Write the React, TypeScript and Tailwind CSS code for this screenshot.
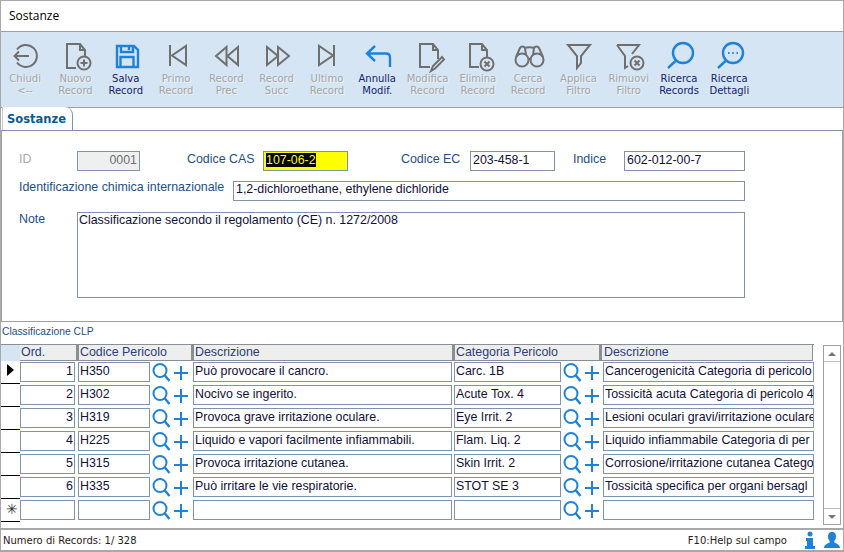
import type { ReactNode } from 'react';

const GREY = '#6f6f6f';
const BLUE = '#1f82d8';

type Tool = { top: string; bottom: string; on?: boolean; icon: ReactNode };

const Svg = ({ children, on }: { children: ReactNode; on?: boolean }) => (
  <svg
    width="36"
    height="33"
    viewBox="0 0 36 33"
    fill="none"
    strokeWidth={on ? 2.4 : 2}
    stroke={on ? BLUE : GREY}
    className="ml-[1px]"
  >
    {children}
  </svg>
);

const TOOLS: Tool[] = [
  {
    top: 'Chiudi',
    bottom: '<--',
    icon: (
      <Svg>
        <path d="M9 9.500a11 11 0 1 1 0 13" />
        <path d="M6 16h15M11 11.500 6.500 16l4.500 4.500" />
      </Svg>
    ),
  },
  {
    top: 'Nuovo',
    bottom: 'Record',
    icon: (
      <Svg>
        <path d="M18 28H9V4h13l5 6v7M22 4v6h5" />
        <circle cx="26" cy="23" r="6.500" />
        <path d="M26 19.500v7M22.500 23h7" />
      </Svg>
    ),
  },
  {
    top: 'Salva',
    bottom: 'Record',
    on: true,
    icon: (
      <Svg on>
        <path d="M9 6h17l4 4v17H9z" />
        <path d="M13 6v6h12V6M21 7v3M12.500 27V17h13v10" />
      </Svg>
    ),
  },
  {
    top: 'Primo',
    bottom: 'Record',
    icon: (
      <Svg>
        <path d="M11 5v21M27 6v19L13 15.500z" />
      </Svg>
    ),
  },
  {
    top: 'Record',
    bottom: 'Prec',
    icon: (
      <Svg>
        <path d="M17.500 7 7 16l10.500 9zM29 7 18.500 16 29 25z" />
      </Svg>
    ),
  },
  {
    top: 'Record',
    bottom: 'Succ',
    icon: (
      <Svg>
        <path d="m8 7 11 9-11 9zM19 7l11 9-11 9z" />
      </Svg>
    ),
  },
  {
    top: 'Ultimo',
    bottom: 'Record',
    icon: (
      <Svg>
        <path d="M25 5v21M10 6v19l14-9.500z" />
      </Svg>
    ),
  },
  {
    top: 'Annulla',
    bottom: 'Modif.',
    on: true,
    icon: (
      <Svg on>
        <path d="m15 6-8 7.500 8 7.500M7 13.500h19c3 0 4 2 4 4V27" />
      </Svg>
    ),
  },
  {
    top: 'Modifica',
    bottom: 'Record',
    icon: (
      <Svg>
        <path d="M20 27H10V4h13l5 6v9M23 4v6h5" />
        <path d="m21 31 2-5 9-9 2 2.500-9 9z" />
      </Svg>
    ),
  },
  {
    top: 'Elimina',
    bottom: 'Record',
    icon: (
      <Svg>
        <path d="M19 27h-9V4h12l5 6v7M22 4v6h5" />
        <circle cx="27" cy="24" r="6.500" />
        <path d="m24.500 21.500 5 5m0-5-5 5" />
      </Svg>
    ),
  },
  {
    top: 'Cerca',
    bottom: 'Record',
    icon: (
      <Svg>
        <circle cx="11" cy="20" r="6.500" />
        <circle cx="26" cy="20" r="6.500" />
        <path d="M17.500 19h3M5 17 9 8c1-2 4-2 5 0l1 7M32 17 28 8c-1-2-4-2-5 0l-1 7M14 8c2-1 7-1 9 0" />
      </Svg>
    ),
  },
  {
    top: 'Applica',
    bottom: 'Filtro',
    icon: (
      <Svg>
        <path d="M7 5h22l-9 11v7l-4 5V16z" />
      </Svg>
    ),
  },
  {
    top: 'Rimuovi',
    bottom: 'Filtro',
    icon: (
      <Svg>
        <path d="M6 5h22l-7 9M6 5l8 11v12l3-2" />
        <circle cx="26" cy="23" r="6.500" />
        <path d="m23.500 20.500 5 5m0-5-5 5" />
      </Svg>
    ),
  },
  {
    top: 'Ricerca',
    bottom: 'Records',
    on: true,
    icon: (
      <Svg on>
        <circle cx="21" cy="13" r="10" />
        <path d="M13.500 21 6 28" />
      </Svg>
    ),
  },
  {
    top: 'Ricerca',
    bottom: 'Dettagli',
    on: true,
    icon: (
      <Svg on>
        <circle cx="21" cy="13" r="10" />
        <path d="M13.500 21 6 28" />
        <path d="M16 13h1.500M20.200 13h1.500M24.500 13H26" strokeWidth="1.800" />
      </Svg>
    ),
  },
];

const ROWS = [
  ['1', 'H350', 'Può provocare il cancro.', 'Carc. 1B', 'Cancerogenicità Categoria di pericolo'],
  ['2', 'H302', 'Nocivo se ingerito.', 'Acute Tox. 4', 'Tossicità acuta Categoria di pericolo 4'],
  ['3', 'H319', 'Provoca grave irritazione oculare.', 'Eye Irrit. 2', 'Lesioni oculari gravi/irritazione oculare'],
  ['4', 'H225', 'Liquido e vapori facilmente infiammabili.', 'Flam. Liq. 2', 'Liquido infiammabile Categoria di per'],
  ['5', 'H315', 'Provoca irritazione cutanea.', 'Skin Irrit. 2', 'Corrosione/irritazione cutanea Catego'],
  ['6', 'H335', 'Può irritare le vie respiratorie.', 'STOT SE 3', 'Tossicità specifica per organi bersagl'],
  ['', '', '', '', ''],
];

const Cell = ({ w, children, right }: { w: string; children?: ReactNode; right?: boolean }) => (
  <div
    className={`${w} h-[20px] shrink-0 overflow-hidden whitespace-nowrap border border-[#7f93ad] bg-white pl-[1px] pr-[1px] text-[12.4px] leading-[17px] text-[#10103a] ${right ? 'text-right' : ''}`}
  >
    {children}
  </div>
);

const LookupIcons = ({ w }: { w: string }) => (
  <div className={`${w} flex h-[21px] shrink-0 items-center`}>
    <svg width="19" height="21" viewBox="0 0 19 21" fill="none" stroke={BLUE} strokeWidth="2" className="ml-[2px]">
      <circle cx="8" cy="8.500" r="6.500" />
      <path d="m12.500 13 5 6" strokeWidth="2.400" />
    </svg>
    <svg width="14" height="14" viewBox="0 0 14 14" fill="none" stroke={BLUE} strokeWidth="2" className="ml-[3px] mt-[1px]">
      <path d="M7 0v14M0 7h14" />
    </svg>
  </div>
);

const HeaderCell = ({ w, children, pad }: { w: string; children: ReactNode; pad: string }) => (
  <div className={`${w} ${pad} h-[16px] shrink-0 border-r border-b border-[#8a8f96] bg-[#eeeeee] text-[12.4px] leading-[15px] text-[#2a3f78]`}>
    {children}
  </div>
);

const Label = ({ w, children, muted, nudge }: { w: string; children: ReactNode; muted?: boolean; nudge?: string }) => (
  <div className={`${w} ${nudge ?? ''} shrink-0 text-[12.4px] leading-[15px] ${muted ? 'text-[#a9a9a9]' : 'text-[#1f4e86]'}`}>{children}</div>
);

const boxClass = 'h-[20px] shrink-0 border border-[#7f93ad] text-[12.4px] px-[2px] whitespace-nowrap overflow-hidden';

export default function App() {
  return (
    <div
      className="flex h-[552px] w-[844px] flex-col overflow-hidden border-x border-t border-[#a8a8a8] bg-white"
      style={{ fontFamily: '"Liberation Sans", Arial, sans-serif' }}
    >
      {/* Title */}
      <div
        className="h-[31px] shrink-0 border-b border-[#a0a0a0] pl-[8px] text-[12px] leading-[30px] text-black"
        style={{ fontFamily: '"Open Sans", sans-serif' }}
      >
        Sostanze
      </div>

      {/* Toolbar */}
      <div className="flex h-[76px] shrink-0 border-b border-[#a0a0a0] bg-[#d6e5f4]">
        <div className="-ml-[1px] flex">
          {TOOLS.map((tool) => (
            <div key={tool.top + tool.bottom} className="flex w-[50.300px] shrink-0 flex-col items-center pt-[8px]">
              <div className="h-[33px]">{tool.icon}</div>
              <div
                className={`whitespace-nowrap text-center text-[10px] leading-[12px] ${tool.on ? 'text-[#14246e]' : 'text-[#a5a5a5] [text-shadow:1px_1px_0_#ffffff80]'}`}
                style={{ fontFamily: '"DejaVu Sans", Verdana, sans-serif' }}
              >
                <div>{tool.top}</div>
                <div>{tool.bottom}</div>
              </div>
            </div>
          ))}
        </div>
      </div>

      {/* Tab strip */}
      <div className="flex h-[23px] shrink-0 items-end border-b border-[#7f93ad]">
        <div
          className="ml-[1px] h-[23px] w-[71px] rounded-tr-[8px] border-r border-l border-[#7f93ad] border-l-[#c8c8c8] bg-white pl-[4px] font-bold leading-[24px] text-[#0a5a96]"
          style={{ fontFamily: '"DejaVu Sans", Verdana, sans-serif', fontSize: '11.5px' }}
        >
          Sostanze
        </div>
      </div>

      {/* Form */}
      <div className="h-[191px] shrink-0 border-x border-b border-[#a0a0a0] pl-[17px]">
        <div className="mt-[20px] flex items-center">
          <Label w="w-[58px]" muted nudge="mb-[4px]">ID</Label>
          <div className={`${boxClass} w-[63px] bg-[#efefef] text-right leading-[17px] text-[#6f6f6f]`}>0001</div>
          <div className="w-[47px] shrink-0" />
          <Label w="w-[76px]" nudge="mb-[4px]">Codice CAS</Label>
          <div className="h-[20px] w-[85px] shrink-0 border border-[#7f93ad] bg-[#ffff00] pl-[2px] text-[12.4px] leading-[17px]">
            <span className="bg-black text-[#ffff00]">107-06-2</span>
          </div>
          <div className="w-[53px] shrink-0" />
          <Label w="w-[69px]" nudge="mb-[4px]">Codice EC</Label>
          <div className={`${boxClass} w-[85px] bg-white leading-[17px] text-[#10103a]`}>203-458-1</div>
          <div className="w-[18px] shrink-0" />
          <Label w="w-[51px]" nudge="mb-[4px]">Indice</Label>
          <div className={`${boxClass} w-[121px] bg-white leading-[17px] text-[#10103a]`}>602-012-00-7</div>
        </div>
        <div className="mt-[9px] flex items-center">
          <Label w="w-[214px]" nudge="mb-[6px]">Identificazione chimica internazionale</Label>
          <div className={`${boxClass} w-[512px] bg-white leading-[15px] text-[#10103a]`}>1,2-dichloroethane, ethylene dichloride</div>
        </div>
        <div className="mt-[11px] flex items-start">
          <Label w="w-[58px]">Note</Label>
          <div className="h-[86px] w-[668px] border border-[#7f93ad] pl-[1px] text-[12.4px] leading-[15px] text-[#10103a]">
            Classificazione secondo il regolamento (CE) n. 1272/2008
          </div>
        </div>
      </div>

      {/* Grid */}
      <div className="pl-[1px] pt-[3px] text-[10.300px] leading-[14px] text-[#1f4e86]">Classificazione CLP</div>
      <div className="mt-[5px] flex min-h-0 flex-1">
        <div className="w-[813px] shrink-0">
          <div className="flex h-[17px] border-t border-[#8a8f96]">
            <div className="w-[19px] shrink-0 bg-[#d6e5f4]" />
            <HeaderCell w="w-[57px]" pad="pl-[1px]">Ord.</HeaderCell>
            <HeaderCell w="w-[115px]" pad="border-l-2 pl-[1px]">Codice Pericolo</HeaderCell>
            <HeaderCell w="w-[261px]" pad="border-l-2 pl-[1px]">Descrizione</HeaderCell>
            <HeaderCell w="w-[147px]" pad="border-l-2 pl-[1px]">Categoria Pericolo</HeaderCell>
            <HeaderCell w="w-[213px]" pad="border-l-2 pl-[2px]">Descrizione</HeaderCell>
          </div>
          {ROWS.map((row, index) => (
            <div key={index} className="flex h-[23px] items-start pt-[1px]">
              <div className="-mt-[1px] flex h-[23px] w-[19px] shrink-0 items-center justify-center border-b border-black bg-white">
                {index === 0 && <div className="ml-[-1px] mt-[-4px] h-0 w-0 border-y-[6px] border-l-[7px] border-y-transparent border-l-black" />}
                {index === 6 && <span className="ml-[3px] mt-[-3px] text-[14px] leading-[14px] text-[#333]">✳</span>}
              </div>
              <Cell w="w-[55px]" right>{row[0]}</Cell>
              <div className="w-[3px] shrink-0" />
              <Cell w="w-[72px]">{row[1]}</Cell>
              <LookupIcons w="w-[43px]" />
              <Cell w="w-[259px]">{row[2]}</Cell>
              <div className="w-[2px] shrink-0" />
              <Cell w="w-[107px]">{row[3]}</Cell>
              <LookupIcons w="w-[42px]" />
              <Cell w="w-[211px]">{row[4]}</Cell>
            </div>
          ))}
        </div>

        {/* Scrollbar */}
        <div className="ml-[9px] mt-[1px] flex h-[180px] w-[18px] shrink-0 flex-col justify-between border border-[#a0a0a0] bg-white">
          <div className="flex h-[16px] items-center justify-center border-b border-[#c0c0c0]">
            <div className="h-0 w-0 border-x-[4px] border-b-[4px] border-x-transparent border-b-[#777]" />
          </div>
          <div className="flex h-[16px] items-center justify-center border-t border-[#c0c0c0]">
            <div className="h-0 w-0 border-x-[4px] border-t-[4px] border-x-transparent border-t-[#777]" />
          </div>
        </div>
      </div>

      {/* Status bar */}
      <div
        className="flex h-[24px] shrink-0 items-center justify-between border-y-2 border-[#a8a8a8] pl-[2px] pr-[2px] text-[10px] text-[#2b1a1a]"
        style={{ fontFamily: '"DejaVu Sans", Verdana, sans-serif' }}
      >
        <span>Numero di Records: 1/ 328</span>
        <div className="flex items-center">
          <span>F10:Help sul campo</span>
          <svg width="12" height="18" viewBox="0 0 12 18" fill={BLUE} className="ml-[17px]">
            <circle cx="6" cy="3" r="2.500" />
            <path d="M2 7h7v8h2v3H1v-3h2v-5H2z" />
          </svg>
          <svg width="18" height="18" viewBox="0 0 18 18" fill={BLUE} className="ml-[7px]">
            <path d="M9 1c3 0 4 2 4 4.500S11.500 10 11 11c1 1.500 6 2 6 6H1c0-4 5-4.500 6-6-.5-1-2-3-2-5.500S6 1 9 1z" />
          </svg>
        </div>
      </div>
    </div>
  );
}
